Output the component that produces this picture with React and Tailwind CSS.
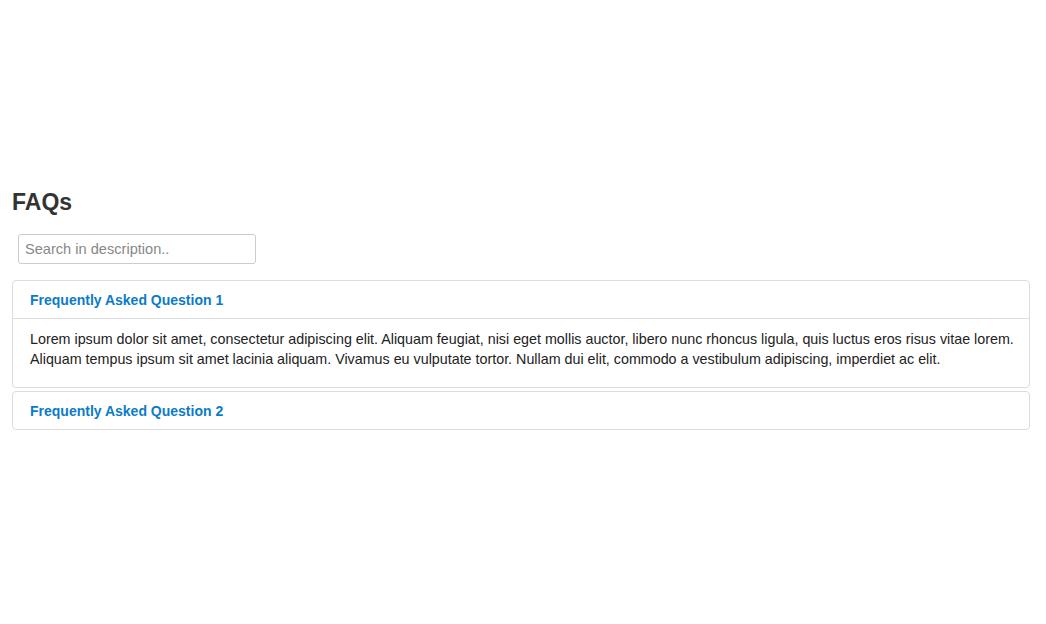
const faqs = [
  {
    title: "Frequently Asked Question 1",
    body: "Lorem ipsum dolor sit amet, consectetur adipiscing elit. Aliquam feugiat, nisi eget mollis auctor, libero nunc rhoncus ligula, quis luctus eros risus vitae lorem. Aliquam tempus ipsum sit amet lacinia aliquam. Vivamus eu vulputate tortor. Nullam dui elit, commodo a vestibulum adipiscing, imperdiet ac elit.",
    open: true,
  },
  { title: "Frequently Asked Question 2", body: "", open: false },
];

const App = () => {
  return (
    <div className="min-h-[624px] bg-white pl-3 pr-4 pt-[189px] text-[#333] font-['Liberation_Sans',Arial,sans-serif]">
      <h2 className="text-[23px] font-bold leading-[26px]">FAQs</h2>
      <input
        type="text"
        placeholder="Search in description.."
        className="mt-[19px] ml-1.5 block h-[30px] w-[238px] rounded-[3px] border border-[#ccc] px-[6px] text-[14.6px] placeholder:text-[#888] outline-none"
      />
      <div className="mt-4 flex flex-col gap-[3px]">
        {faqs.map((f) => (
          <div key={f.title} className="rounded-[4px] border border-[#ddd] bg-white">
            <div className={`px-[17px] pt-[11px] pb-[9px] ${f.open ? "border-b border-[#ddd]" : ""}`}>
              <h4 className="text-[14px] font-bold leading-[17px] text-[#0b7bc9]">{f.title}</h4>
            </div>
            {f.open && (
              <div className="pl-[17px] pr-[8px] pt-[10px] pb-[9px]">
                <p className="mb-[9px] text-[14.3px] leading-[20px] text-[#222]">{f.body}</p>
              </div>
            )}
          </div>
        ))}
      </div>
    </div>
  );
};

export default App;
